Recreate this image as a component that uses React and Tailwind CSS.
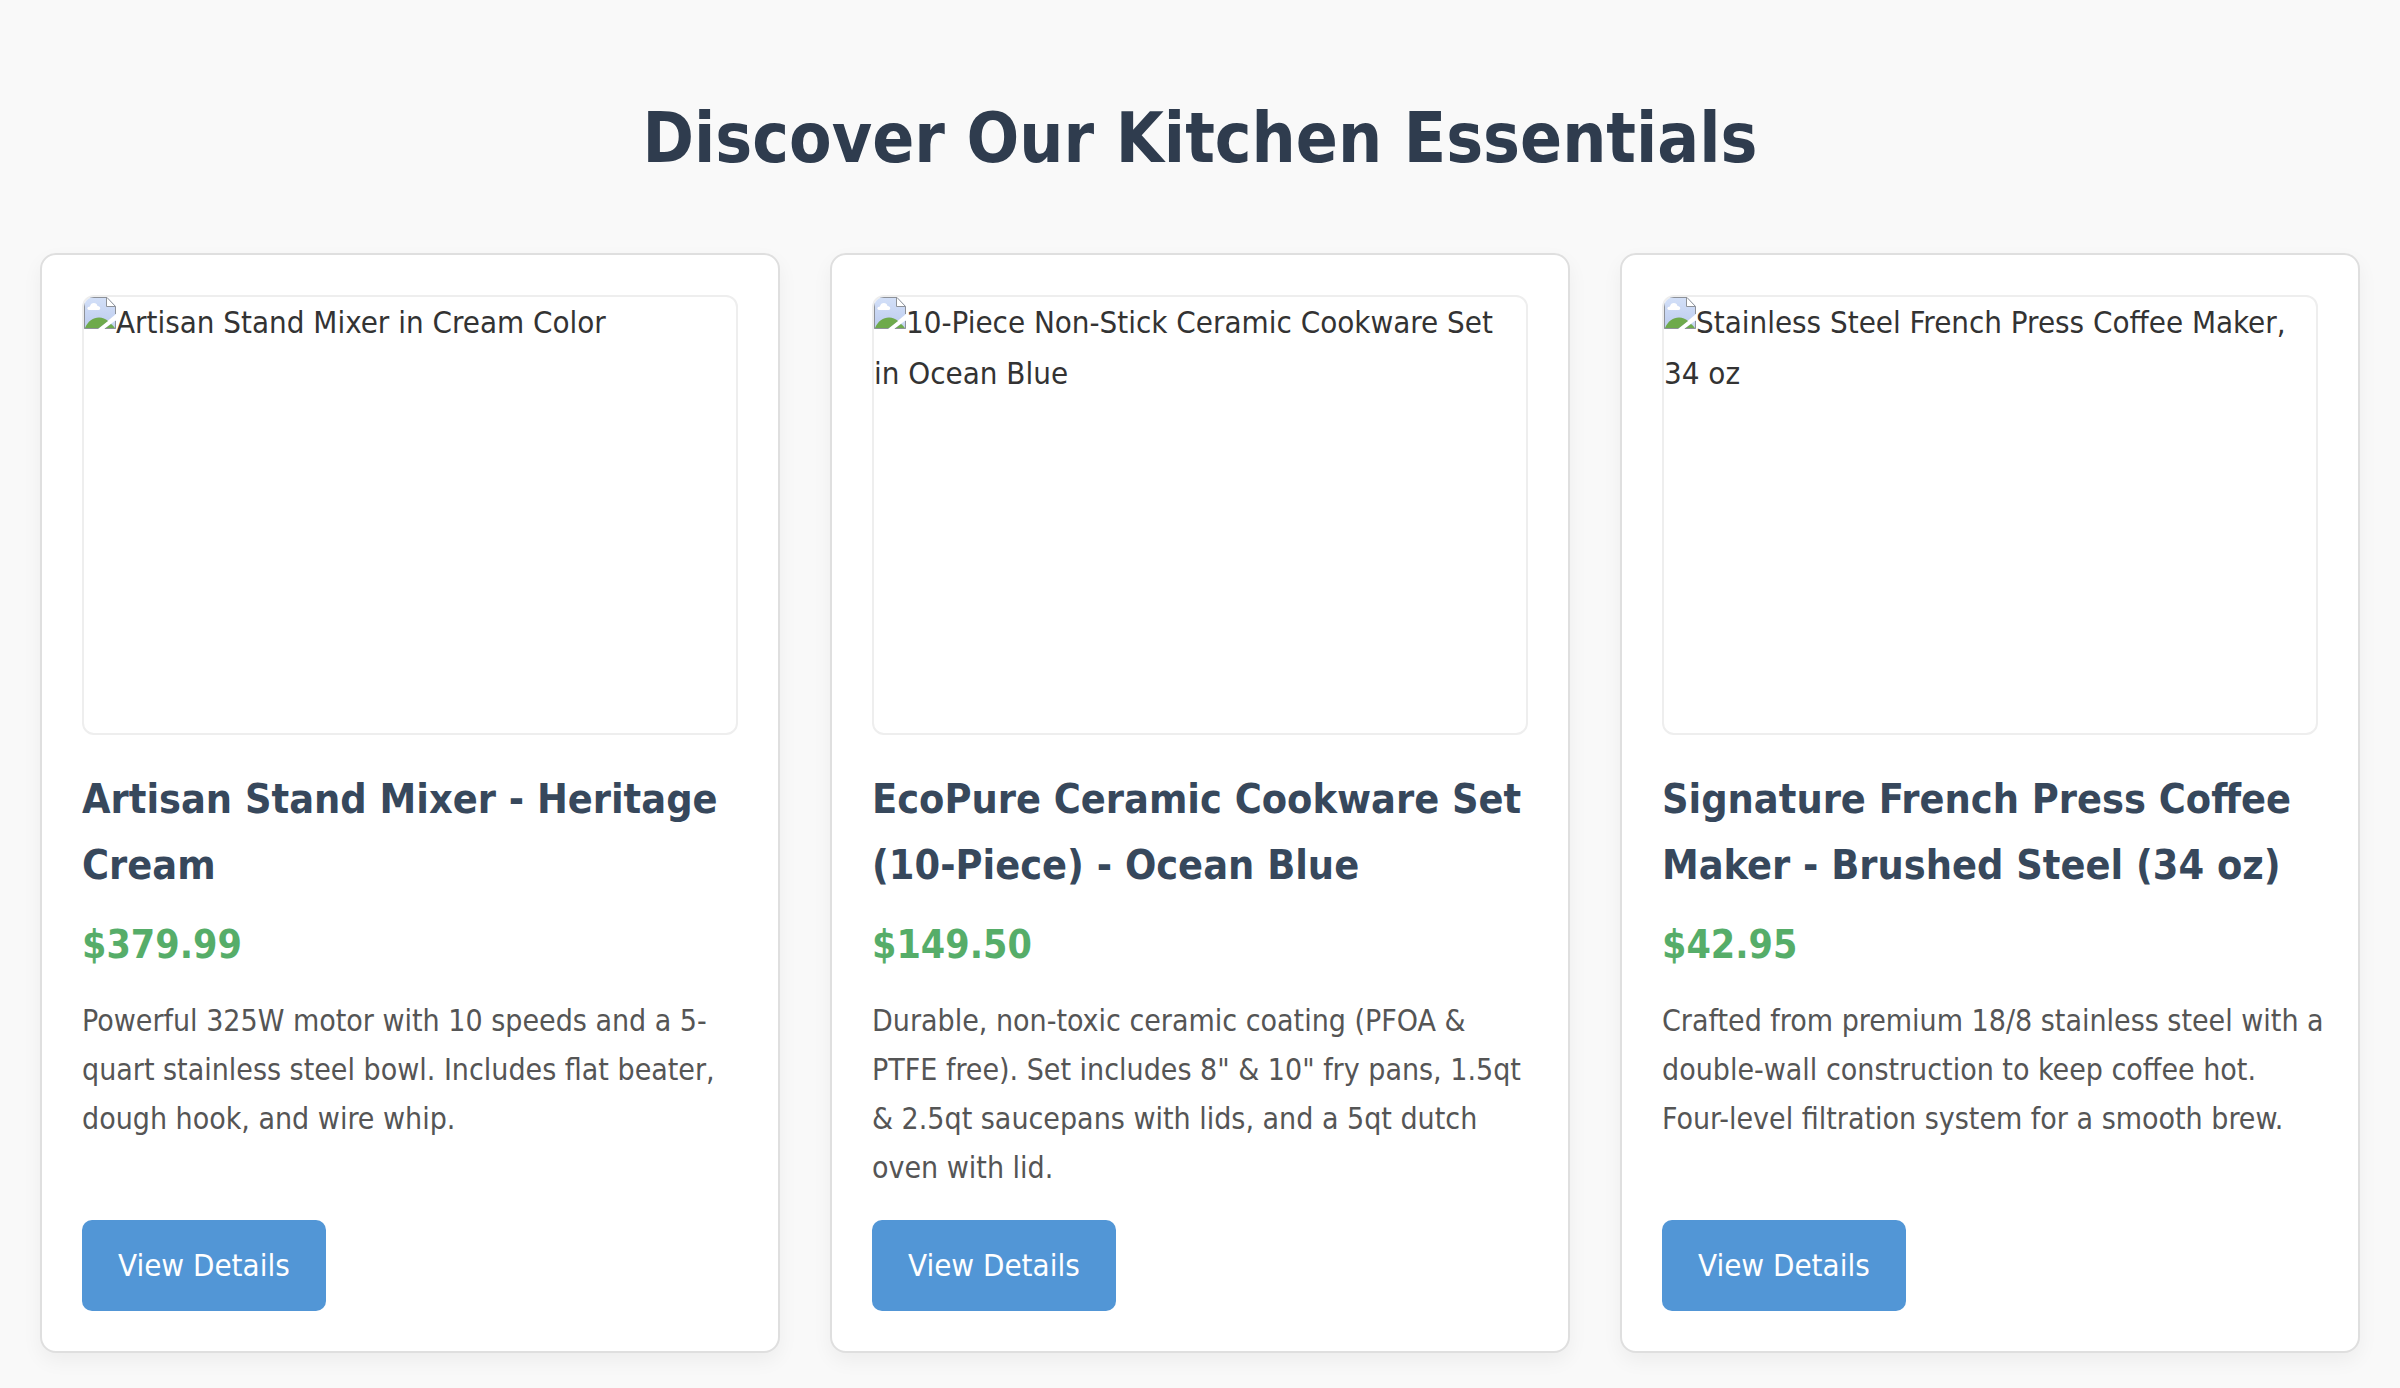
import React from "react";

const products = [
  {
    alt: "Artisan Stand Mixer in Cream Color",
    name: "Artisan Stand Mixer - Heritage Cream",
    price: "$379.99",
    description:
      "Powerful 325W motor with 10 speeds and a 5-quart stainless steel bowl. Includes flat beater, dough hook, and wire whip.",
  },
  {
    alt: "10-Piece Non-Stick Ceramic Cookware Set in Ocean Blue",
    name: "EcoPure Ceramic Cookware Set (10-Piece) - Ocean Blue",
    price: "$149.50",
    description:
      "Durable, non-toxic ceramic coating (PFOA & PTFE free). Set includes 8\" & 10\" fry pans, 1.5qt & 2.5qt saucepans with lids, and a 5qt dutch oven with lid.",
  },
  {
    alt: "Stainless Steel French Press Coffee Maker, 34 oz",
    name: "Signature French Press Coffee Maker - Brushed Steel (34 oz)",
    price: "$42.95",
    description:
      "Crafted from premium 18/8 stainless steel with a double-wall construction to keep coffee hot. Four-level filtration system for a smooth brew.",
  },
];

function MissingImageIcon() {
  return (
    <svg viewBox="0 0 32 32" aria-hidden="true" className="inline-block size-8 align-top">
      <defs>
        <linearGradient id="sky" x1="0" y1="0" x2="0" y2="1">
          <stop offset="0" stopColor="#d3e0f8" />
          <stop offset="1" stopColor="#bccbee" />
        </linearGradient>
      </defs>
      <path d="M0 0H23L32 9V17L14 32H0Z" fill="url(#sky)" />
      <path d="M32 23L20 32H32Z" fill="url(#sky)" />
      <path d="M1 31C4 24 9 20.500 15 20.500C18.500 20.500 21.500 22 24 24L15 31Z" fill="#6eaa4c" />
      <path d="M27 27L21 31.500H31C30 29.500 28.500 28 27 27Z" fill="#6eaa4c" />
      <path d="M5 13C2.500 12.500 3 9.500 6 9.500C6.500 5 13 5 13.500 9C17 9 17 13 14.500 13Z" fill="#fff" />
      <path d="M23 0L32 9H23Z" fill="#fff" />
      <path
        d="M0 0.500H23L31.500 9.500V17M22.500 0.500V9.500H31.500M0.500 0V31.500H14.500M31.500 24V31.500H21"
        fill="none"
        stroke="#8e9299"
      />
    </svg>
  );
}

function ProductCard({ product }) {
  return (
    <article className="flex flex-col items-start rounded-2xl border-2 border-[#dfdfdf] bg-white p-10 shadow-[0_8px_20px_rgba(0,0,0,0.05)]">
      <div className="h-[440px] w-full overflow-hidden rounded-xl border-2 border-[#eeeeee] text-[31px] leading-[51px] text-[#333333]">
        <MissingImageIcon />
        {product.alt}
      </div>
      <h2 className="mt-[31px] text-[41px] leading-[66px] font-bold text-[#37485c]">{product.name}</h2>
      <p className="mt-4 text-[39px] leading-[62px] font-bold text-[#56ad69]">{product.price}</p>
      <p className="-mr-2 mt-5 mb-7 text-[30px] leading-[49px] text-[#555555]">{product.description}</p>
      <a
        href="#details"
        className="mt-auto rounded-[10px] bg-[#5296d6] px-9 py-5 text-[31px] leading-[51px] text-white"
      >
        View Details
      </a>
    </article>
  );
}

export default function App() {
  return (
    <main className="min-h-screen bg-[#f9f9f9] px-10 pt-20 pb-8 font-['DejaVu_Sans_Condensed','DejaVu_Sans',sans-serif]">
      <h1 className="mb-14 text-center text-[69px] leading-[117px] font-bold text-[#2f3c4e]">
        Discover Our Kitchen Essentials
      </h1>
      <div className="grid grid-cols-3 gap-[50px]">
        {products.map((product) => (
          <ProductCard key={product.name} product={product} />
        ))}
      </div>
    </main>
  );
}
